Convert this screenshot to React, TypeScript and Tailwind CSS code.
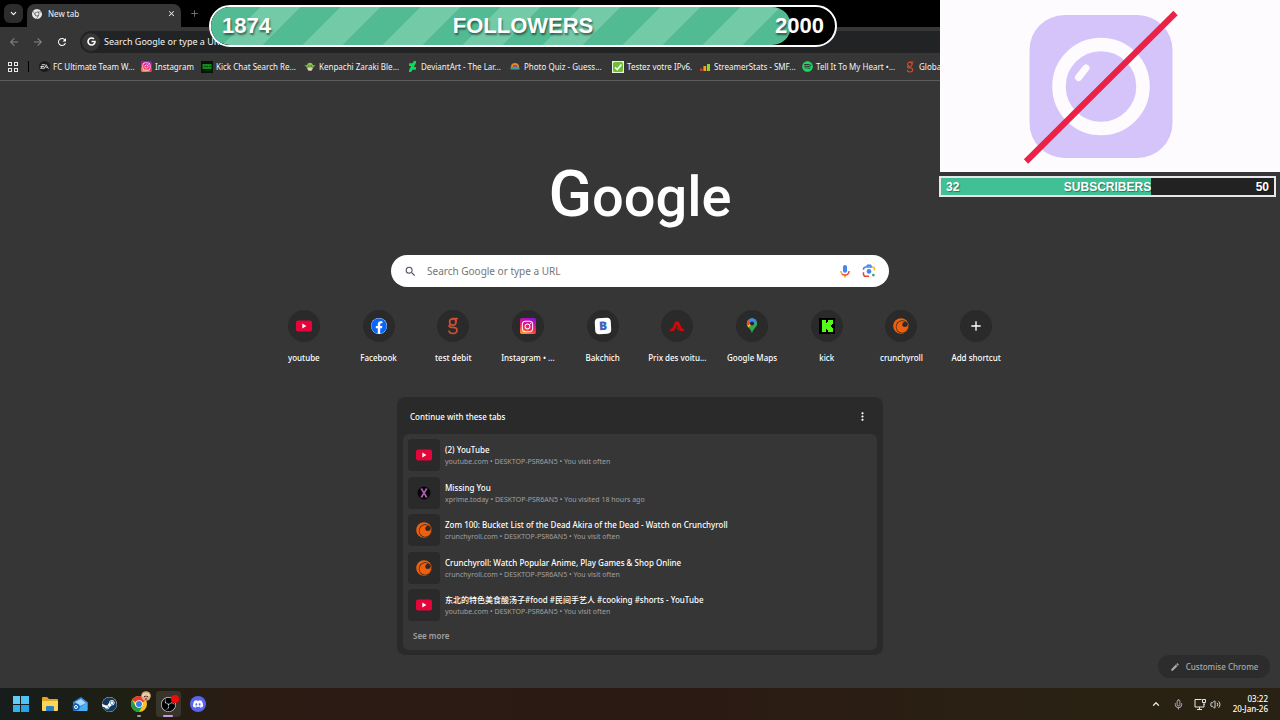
import React, { useState } from 'react';
import { FaFacebook, FaInstagram, FaSpotify, FaSteam, FaGoogle } from "react-icons/fa";
import { SiDeviantart, SiDiscord, SiEa, SiObsstudio, SiGooglechrome } from "react-icons/si";
import { MdArrowBack, MdArrowForward, MdRefresh, MdSearch, MdEdit, MdMoreVert, MdAdd, MdClose } from "react-icons/md";
import { ChevronDown, ChevronUp, Mic, Volume2 } from 'lucide-react';


const Youtube = () => (
    <svg viewBox="0 0 16 12" className="w-4 h-3">
        <rect width="16" height="11" y="0.5" rx="2" fill="#e6053a" />
        <path d="M6.3 3.6 L10.4 6 L6.3 8.4 Z" fill="#fff" />
    </svg>
);

const Insta = ({ small = false }: { small?: boolean }) => (
    <span className={`${small ? "w-[11px] h-[11px] text-[9px]" : "w-4 h-4 text-[13px]"} rounded-xs flex items-center justify-center text-white bg-[linear-gradient(20deg,#fdb528_0%,#f5274f_38%,#d40ba0_65%,#7a1bd6_100%)]`}>
        <FaInstagram />
    </span>
);

// The "g" with two loops used by the speed test site
const Degrouptest = ({ small = false }: { small?: boolean }) => (
    <svg viewBox="0 0 12 18" className={small ? "w-2 h-3" : "w-3 h-[18px]"} fill="none" stroke="#d14d31" strokeWidth="1.7">
        <circle cx="5.8" cy="5" r="3.2" />
        <path d="M5 1.5 H11 M9 5 V1.5 M3 7.5 C1 9.5 3 10.4 6 10.4 C9 10.4 10 12 10 13.3 C10 15.5 8 16.5 6 16.5 C3.5 16.5 2 15.4 2 13.6" />
    </svg>
);

const Bakchich = () => (
    <span className="w-4 h-4 rounded-sm bg-white flex items-center justify-center text-[12px] font-black text-[#3c62b8] -rotate-3">B</span>
);

const Automobile = () => (
    <svg viewBox="0 0 16 12" className="w-4 h-3" fill="#cf0a0a">
        <path d="M0.5 11 L2 8.5 H3.2 L6.2 1.5 H9.8 L12.8 8.5 H14 L15.5 11 H11 L8 5 L5 11 Z" />
        <path d="M6.5 7.5 L9 7.5 L10.8 11 Z" />
    </svg>
);

const MapsPin = () => (
    <svg viewBox="0 0 12 17" className="w-3 h-4">
        <path d="M6 17 C6 12 0.5 10 0.5 5.8 A5.5 5.5 0 0 1 11.5 5.8 C11.5 10 6 12 6 17 Z" fill="#34a853" />
        <path d="M0.5 5.8 A5.5 5.5 0 0 1 2 2 L6 6 L2.4 10.2 C1.2 8.8 0.5 7.4 0.5 5.8 Z" fill="#fbbc04" />
        <path d="M0.5 5.8 A5.5 5.5 0 0 1 2 2 L5 5 L1.2 8.2 Z" fill="#ea4335" />
        <path d="M2 2 A5.5 5.5 0 0 1 11 3.6 L6 7 Z" fill="#4285f4" />
        <circle cx="6" cy="5.8" r="2.1" fill="#20242c" />
    </svg>
);

const Kick = () => (
    <svg viewBox="0 0 16 16" className="w-4 h-4">
        <rect width="16" height="16" fill="#000" />
        <path d="M3 2 H7 V5 H8 V4 H9 V2 H14 V6 H13 V7 H12 V9 H13 V10 H14 V14 H9 V12 H8 V11 H7 V14 H3 Z" fill="#53fc18" />
    </svg>
);

const Crunchyroll = () => (
    <svg viewBox="0 0 16 16" className="w-4 h-4">
        <circle cx="8" cy="8" r="7.8" fill="#f0600c" />
        <circle cx="9.2" cy="8.8" r="6.5" fill="#2a2a2a" />
        <circle cx="9.2" cy="8.9" r="5.8" fill="#f0600c" />
        <circle cx="11.8" cy="6.6" r="2.5" fill="#2a2a2a" />
    </svg>
);

const Xprime = () => (
    <svg viewBox="0 0 14 14" className="w-3.5 h-3.5" fill="none">
        <circle cx="7" cy="7" r="6.5" fill="#050308" />
        <path d="M4.5 3 L9.5 11 M9.5 3 L4.5 11" stroke="#b25fb0" strokeWidth="1.6" />
        <path d="M3.6 3 H5.6 M8.4 3 H10.4 M3.6 11 H5.6 M8.4 11 H10.4" stroke="#b25fb0" />
    </svg>
);

const KickChat = () => (
    <svg viewBox="0 0 12 12" className="w-3 h-3">
        <rect width="12" height="12" fill="#051505" />
        <path d="M1.5 3 H10.5 V8 H1.5 Z" fill="#118c1c" />
        <path d="M3 5.5 H4.5 M5.5 5.5 H7 M8 5.5 H9.5 M2 9.5 H10" stroke="#042e08" />
    </svg>
);

const Grogu = () => (
    <svg viewBox="0 0 12 12" className="w-3 h-3">
        <path d="M0.5 4 L11.5 4 L9.5 6.5 H2.5 Z" fill="#5fae35" />
        <circle cx="6" cy="4.6" r="2.8" fill="#8bc34a" />
        <path d="M2.8 6.8 H9.2 L7.5 9.8 H4.5 Z" fill="#d9d2c2" />
        <path d="M4.4 5 H5.4 M6.6 5 H7.6" stroke="#142010" />
    </svg>
);

const PhotoQuiz = () => (
    <svg viewBox="0 0 12 12" className="w-3 h-3">
        <path d="M2 6 A4 4 0 0 1 10 6 Z" fill="#e48728" />
        <rect x="1.5" y="6" width="9" height="2.6" rx="0.6" fill="#30a3a6" />
        <path d="M4 5 H8" stroke="#6d3fae" strokeWidth="1.4" />
    </svg>
);

const CheckBox = () => (
    <svg viewBox="0 0 12 12" className="w-3 h-3">
        <rect width="12" height="12" fill="#e8f4df" />
        <rect x="1" y="1" width="10" height="10" rx="1.5" fill="#6fbf32" />
        <path d="M3 6.3 L5.2 8.5 L9.4 3.4" fill="none" stroke="#fff" strokeWidth="1.6" />
    </svg>
);

const Stats = () => (
    <svg viewBox="0 0 12 12" className="w-3 h-3">
        <rect x="1" y="7.5" width="2.4" height="2.5" fill="#e03a22" />
        <rect x="4.4" y="5" width="2.8" height="5" fill="#eda420" />
        <rect x="8" y="3" width="3" height="7" fill="#8ddb1e" />
    </svg>
);

const VoiceMic = () => (
    <svg viewBox="0 0 24 24" className="w-3.5 h-3.5">
        <rect x="8.5" y="1.5" width="7" height="13.5" rx="3.5" fill="#4285f4" />
        <path d="M12 18 V23" stroke="#f9ab00" strokeWidth="2.6" />
        <path d="M5 12 C5 14.5 6 16.2 7.5 17.4" fill="none" stroke="#f9ab00" strokeWidth="2.4" />
        <path d="M7 17 C9.5 19.5 14.5 19.5 17 17 C18.3 15.8 19 14 19 12" fill="none" stroke="#ea4335" strokeWidth="2.4" />
    </svg>
);

const Lens = () => (
    <svg viewBox="0 0 24 24" className="w-3.5 h-3.5" fill="none" strokeWidth="2.6">
        <path d="M2.5 10 V9 A4 4 0 0 1 6.5 5 H17.5" stroke="#4285f4" />
        <path d="M8 4.5 L9.5 2.2 H14.5 L16 4.5" stroke="#4285f4" />
        <path d="M17.5 5 A4 4 0 0 1 21.5 9 V11" stroke="#fbbc04" />
        <path d="M2.5 14 V17 A4 4 0 0 0 6.5 21 H12" stroke="#ea4335" />
        <circle cx="12" cy="12.7" r="4" fill="#4285f4" />
        <circle cx="19.5" cy="19" r="2.3" fill="#34a853" />
    </svg>
);

const Network = () => (
    <svg viewBox="0 0 12 12" className="w-3 h-3" fill="none" stroke="currentColor">
        <path d="M7.5 1.5 H1 V9 H10 V6 M3 11.5 H8 M5.5 9 V11.5" />
        <path d="M8.5 1.5 H11.5 V4.5 H8.5 Z M10 4.5 V7" />
    </svg>
);


const bookmarks = [
    { name: "FC Ultimate Team W...", width: "w-[102px]", icon: <span className="w-[11px] h-[11px] rounded-full bg-[#1c1c1c] flex items-center justify-center"><SiEa className="text-[9px] text-gray-300" /></span> },
    { name: "Instagram", width: "w-[61px]", icon: <Insta small /> },
    { name: "Kick Chat Search Re...", width: "w-[103px]", icon: <KickChat /> },
    { name: "Kenpachi Zaraki Ble...", width: "w-[102px]", icon: <Grogu /> },
    { name: "DeviantArt - The Lar...", width: "w-[103px]", icon: <SiDeviantart className="text-[11px] text-[#05e05a]" /> },
    { name: "Photo Quiz - Guess...", width: "w-[103px]", icon: <PhotoQuiz /> },
    { name: "Testez votre IPv6.", width: "w-[87px]", icon: <CheckBox /> },
    { name: "StreamerStats - SMF...", width: "w-[102px]", icon: <Stats /> },
    { name: "Tell It To My Heart •...", width: "w-[103px]", icon: <FaSpotify className="text-[11px] text-[#1ed760]" /> },
    { name: "Global", width: "w-[60px]", icon: <Degrouptest small /> },
];

const shortcuts = [
    { name: "youtube", icon: <Youtube /> },
    { name: "Facebook", icon: <span className="bg-white rounded-full"><FaFacebook className="text-base text-[#0866ff]" /></span> },
    { name: "test debit", icon: <Degrouptest /> },
    { name: "Instagram • ...", icon: <Insta /> },
    { name: "Bakchich", icon: <Bakchich /> },
    { name: "Prix des voitu...", icon: <Automobile /> },
    { name: "Google Maps", icon: <MapsPin /> },
    { name: "kick", icon: <Kick /> },
    { name: "crunchyroll", icon: <Crunchyroll /> },
];

const tabs = [
    { title: "(2) YouTube", info: "youtube.com • DESKTOP-PSR6AN5 • You visit often", icon: <Youtube /> },
    { title: "Missing You", info: "xprime.today • DESKTOP-PSR6AN5 • You visited 18 hours ago", icon: <Xprime /> },
    { title: "Zom 100: Bucket List of the Dead Akira of the Dead - Watch on Crunchyroll", info: "crunchyroll.com • DESKTOP-PSR6AN5 • You visit often", icon: <Crunchyroll /> },
    { title: "Crunchyroll: Watch Popular Anime, Play Games & Shop Online", info: "crunchyroll.com • DESKTOP-PSR6AN5 • You visit often", icon: <Crunchyroll /> },
    { title: "东北的特色美食酸汤子#food #民间手艺人 #cooking #shorts - YouTube", info: "youtube.com • DESKTOP-PSR6AN5 • You visit often", icon: <Youtube /> },
];


const BrowserTop = () => {

    const [url, setUrl] = useState("");

    return (
        <header className="overflow-hidden">
            {/* Tab strip */}
            <div className="h-[27px] bg-black flex items-end pl-1">
                <button aria-label="Search tabs" className="w-[19px] h-[19px] mb-1 rounded-md bg-[#2c2c2c] text-white flex items-center justify-center">
                    <ChevronDown size={9} strokeWidth={3} />
                </button>
                <div className="ml-1 w-[154px] h-[23px] rounded-t-lg bg-[#363636] text-gray-100 flex items-center px-[5px] pb-1 gap-1.5">
                    <SiGooglechrome className="text-[10px] text-gray-200" />
                    <span className="flex-1 text-[8px]">New tab</span>
                    <button aria-label="Close tab"><MdClose className="text-[9px]" /></button>
                </div>
                <button aria-label="New tab" className="ml-2 mb-2 text-gray-500"><MdAdd className="text-[11px]" /></button>
            </div>

            {/* Address bar */}
            <div className="h-[27px] bg-[#363636] flex items-center pt-0.5 pl-2 gap-3">
                <button aria-label="Back" className="text-[#858585]"><MdArrowBack className="text-xs" /></button>
                <button aria-label="Forward" className="text-[#858585]"><MdArrowForward className="text-xs" /></button>
                <button aria-label="Reload" className="text-white"><MdRefresh className="text-xs" /></button>
                <div className="flex-1 h-[22px] rounded-l-full bg-[#222324] flex items-center pl-0.5 gap-1">
                    <span className="w-[18px] h-[18px] rounded-full bg-[#363636] flex items-center justify-center text-white"><FaGoogle className="text-[9px]" /></span>
                    <input type="text" aria-label="Address" value={url} onChange={(e) => setUrl(e.target.value)} placeholder="Search Google or type a URL" className="flex-1 text-[9px] text-white placeholder:text-gray-100 outline-none" />
                </div>
            </div>

            {/* Bookmarks */}
            <nav className="h-[27px] bg-[#363636] border-b border-[#5c5c5c] flex items-center pl-2 pb-px text-gray-100">
                <button aria-label="Apps" className="w-[10px] h-[10px] grid grid-cols-2 gap-0.5">
                    <span className="border border-gray-200"></span>
                    <span className="border border-gray-200"></span>
                    <span className="border border-gray-200"></span>
                    <span className="border border-gray-200"></span>
                </button>
                <span className="w-px h-[11px] ml-[10px] mr-[9px] bg-black"></span>
                {bookmarks.map((b) => (
                    <a key={b.name} href="#" className={`${b.width} shrink-0 flex items-center gap-[3px] whitespace-nowrap text-[8px]`}>
                        <span className="w-3 shrink-0 flex justify-center">{b.icon}</span>
                        {b.name}
                    </a>
                ))}
            </nav>
        </header>
    );
}


const TabsCard = () => (
    <section className="w-[486px] mt-[33px] rounded-lg bg-[#2a2a2a] px-1.5 pb-[5px]">
        <div className="h-[37px] flex items-center justify-between pl-[7px] pr-2 pt-0.5 text-white">
            <h2 className="text-[8px] font-medium">Continue with these tabs</h2>
            <button aria-label="More actions"><MdMoreVert className="text-[13px]" /></button>
        </div>
        <div className="h-[216px] rounded-md bg-[#363636] px-[5px] pt-[5px]">
            <div className="h-[182px] flex flex-col justify-between">
                {tabs.map((t) => (
                    <a key={t.title} href="#" className="flex items-center gap-[5px]">
                        <span className="w-8 h-8 rounded-sm bg-[#2a2a2a] flex items-center justify-center">{t.icon}</span>
                        <span className="flex flex-col pt-0.5 whitespace-nowrap">
                            <span className="text-[8px] leading-3 font-medium text-white">{t.title}</span>
                            <span className="text-[7px] leading-3 text-[#a0a0a0]">{t.info}</span>
                        </span>
                    </a>
                ))}
            </div>
            <button className="mt-2 ml-[5px] text-[8px] leading-3 font-semibold text-[#a0a0a0]">See more</button>
        </div>
    </section>
);


const NewTabPage = () => {

    const [query, setQuery] = useState("");

    return (
        <main className="relative flex-1 bg-[#363636] flex flex-col items-center">
            <h1 className="mt-20 h-[68px] leading-[68px] font-[Roboto] font-medium text-[56px] text-white"><span className="text-[64px]">G</span>oogle</h1>

            {/* Search box */}
            <div className="mt-[26px] w-[498px] h-8 rounded-full bg-white flex items-center px-[13px] gap-2.5">
                <MdSearch className="text-[13px] text-gray-600" />
                <input type="text" aria-label="Search" value={query} onChange={(e) => setQuery(e.target.value)} placeholder="Search Google or type a URL" className="flex-1 text-[10px] text-gray-800 placeholder:text-[#757575] outline-none" />
                <button aria-label="Search by voice"><VoiceMic /></button>
                <button aria-label="Search by image"><Lens /></button>
            </div>

            {/* Shortcuts */}
            <div className="mt-[23px] w-[747px] grid grid-cols-10 text-[8px] leading-3 font-medium text-white">
                {shortcuts.map((s) => (
                    <a key={s.name} href="#" className="flex flex-col items-center gap-2.5 whitespace-nowrap">
                        <span className="w-8 h-8 rounded-full bg-[#2a2a2a] flex items-center justify-center">{s.icon}</span>
                        {s.name}
                    </a>
                ))}
                <button className="flex flex-col items-center gap-2.5 whitespace-nowrap">
                    <span className="w-8 h-8 rounded-full bg-[#2a2a2a] flex items-center justify-center"><MdAdd className="text-base" /></span>
                    Add shortcut
                </button>
            </div>

            <TabsCard />

            <button className="absolute right-2.5 bottom-2.5 w-28 h-[23px] rounded-full bg-[#2c2c2c] flex items-center justify-center gap-1.5 text-[8px] font-medium text-[#a8a8a8]">
                <MdEdit className="text-[10px]" />
                Customise Chrome
            </button>
        </main>
    );
}


const Taskbar = () => (
    <footer className="h-8 flex items-center justify-between pl-2 pr-3 bg-[linear-gradient(90deg,#171d1b_0%,#1f1f13_10%,#2c1b13_20%,#2b1a14_55%,#292213_85%,#292214_100%)]">
        <div className="w-[202px] flex justify-between">
            <button aria-label="Start" className="w-[25px] h-[26px] flex items-center justify-center">
                <span className="w-4 h-4 grid grid-cols-2 gap-px">
                    <span className="bg-[#63cdf7]"></span>
                    <span className="bg-[#4fc3f5]"></span>
                    <span className="bg-[#35b1ee]"></span>
                    <span className="bg-[#25a3e8]"></span>
                </span>
            </button>
            <button aria-label="Files" className="w-[25px] h-[26px] flex items-center justify-center">
                <svg viewBox="0 0 18 16" className="w-[18px] h-4">
                    <path d="M1 2 Q1 1 2 1 H6 L8 3 H16 Q17 3 17 4 V14 H1 Z" fill="#e0a526" />
                    <path d="M1 5 H17 V14 Q17 15 16 15 H2 Q1 15 1 14 Z" fill="#f9d55a" />
                    <path d="M5 15 V11 Q5 10 6 10 H12 Q13 10 13 11 V15 Z" fill="#2b7fc4" />
                </svg>
            </button>
            <button aria-label="Mail" className="w-[25px] h-[26px] flex items-center justify-center">
                <svg viewBox="0 0 16 16" className="w-4 h-4">
                    <path d="M1 6 L9 1 L15.5 6 V14 Q15.5 15 14.5 15 H2 Q1 15 1 14 Z" fill="#2b86dd" />
                    <path d="M3 6 L9 3 L14 7 L8 10 Z" fill="#a9d8f8" />
                    <path d="M15.5 6 V14 Q15.5 15 14.5 15 H3 Z" fill="#4aaef2" />
                    <circle cx="4" cy="11" r="3.6" fill="#0f5cb3" />
                    <circle cx="4" cy="11" r="1.5" fill="none" stroke="#fff" />
                </svg>
            </button>
            <button aria-label="Steam" className="w-[25px] h-[26px] flex items-center justify-center">
                <span className="rounded-full bg-white"><FaSteam className="text-[15px] text-[#123a5e]" /></span>
            </button>
            <button aria-label="Chrome" className="relative w-[25px] h-[26px] flex items-center justify-center">
                <svg viewBox="0 0 16 16" className="w-4 h-4">
                    <circle cx="8" cy="8" r="8" fill="#fbc116" />
                    <path d="M8 8 L1.1 4 A8 8 0 0 1 14.9 4 Z" fill="#e33b2e" />
                    <path d="M8 4 H14.9 L8 8 Z" fill="#e33b2e" />
                    <path d="M1.1 4 A8 8 0 0 0 8 16 L11.5 10 L8 8 L4.5 10 Z" fill="#229b48" />
                    <circle cx="8" cy="8" r="3.8" fill="#fff" />
                    <circle cx="8" cy="8" r="3" fill="#3b7ded" />
                </svg>
                <svg viewBox="0 0 10 10" className="absolute right-0 top-0 w-2.5 h-2.5">
                    <circle cx="5" cy="5" r="4.8" fill="#dba982" />
                    <path d="M1 4 Q5 0 9 4 L8 6 L5 3 L2 6 Z" fill="#eadbc2" />
                    <path d="M3 5.5 H4.5 M5.5 5.5 H7 M4 8 H6" stroke="#4a2c1c" />
                </svg>
                <span className="absolute bottom-0 w-1 h-0.5 rounded-full bg-gray-400"></span>
            </button>
            <button aria-label="OBS" className="relative w-[25px] h-[26px] rounded-sm bg-white/10 flex items-center justify-center">
                <span className="rounded-full bg-black"><SiObsstudio className="text-[15px] text-gray-300" /></span>
                <span className="absolute right-0.5 top-1 w-2 h-2 rounded-full bg-[#f00a0a]"></span>
                <span className="absolute bottom-0 w-2.5 h-0.5 rounded-full bg-[#c79be0]"></span>
            </button>
            <button aria-label="Discord" className="w-[25px] h-[26px] flex items-center justify-center">
                <span className="w-4 h-4 rounded-full bg-[#5865f2] flex items-center justify-center text-white"><SiDiscord className="text-[10px]" /></span>
            </button>
        </div>

        {/* Tray */}
        <div className="flex items-center text-gray-200">
            <button aria-label="Hidden icons"><ChevronUp size={10} strokeWidth={3} /></button>
            <button aria-label="Microphone" className="ml-3"><Mic size={11} className="text-[#c5b3c9]" /></button>
            <button aria-label="Network" className="ml-2.5"><Network /></button>
            <button aria-label="Volume" className="ml-1"><Volume2 size={11} /></button>
            <div className="ml-3 text-right text-[8px] leading-[10px] font-medium text-white">
                <p>03:22</p>
                <p>20-Jan-26</p>
            </div>
        </div>
    </footer>
);


const FollowersGoal = () => (
    <div className="absolute left-[209px] top-[5px] w-[628px] h-[42px] rounded-full border-2 border-white bg-black overflow-hidden font-['Liberation_Sans'] font-bold text-[22px] text-white">
        <div className="w-[93%] h-full rounded-r-full bg-[#52bb93] bg-[linear-gradient(-45deg,#72caa6_25%,transparent_25%,transparent_50%,#72caa6_50%,#72caa6_75%,transparent_75%)] bg-[length:80px_80px] bg-[position:52px_bottom]"></div>
        <div className="absolute inset-0 px-[11px] pb-0.5 grid grid-cols-3 items-center [text-shadow:1px_2px_2px_rgba(0,0,0,0.5)]">
            <span>1874</span>
            <span className="text-center">FOLLOWERS</span>
            <span className="text-right">2000</span>
        </div>
    </div>
);

const CameraPanel = () => (
    <aside className="absolute right-0 top-0 w-[341px]">
        <div className="h-[172px] ml-px bg-[#fefbff] flex justify-center">
            <svg viewBox="0 0 160 160" className="w-40 h-40 mt-2 mr-[18px]">
                <rect x="8.5" y="7" width="143" height="143" rx="35" fill="#d5c4fa" />
                <circle cx="80" cy="78.5" r="42" fill="none" stroke="#fefbff" strokeWidth="13.5" />
                <path d="M57.5 69.5 L65 60" stroke="#fefbff" strokeWidth="7" strokeLinecap="round" />
                <path d="M5 153.5 L154.5 5" stroke="#e92246" strokeWidth="6" />
            </svg>
        </div>
        <div className="relative mt-1 mr-1 h-[21px] border-2 border-gray-200 bg-[#222222] font-['Liberation_Sans'] font-bold text-xs text-white">
            <div className="w-[63%] h-full bg-[#41c096]"></div>
            <div className="absolute inset-0 px-[5px] grid grid-cols-3 items-center [text-shadow:1px_1px_1px_rgba(0,0,0,0.4)]">
                <span>32</span>
                <span className="text-center">SUBSCRIBERS</span>
                <span className="text-right">50</span>
            </div>
        </div>
    </aside>
);


const App = () => {
    return (
        <div className="relative min-h-screen flex flex-col overflow-hidden font-['Noto_Sans','Noto_Sans_CJK_SC',sans-serif]">
            <BrowserTop />
            <NewTabPage />
            <Taskbar />

            {/* Stream overlays */}
            <FollowersGoal />
            <CameraPanel />
        </div>
    );
}

export default App;
